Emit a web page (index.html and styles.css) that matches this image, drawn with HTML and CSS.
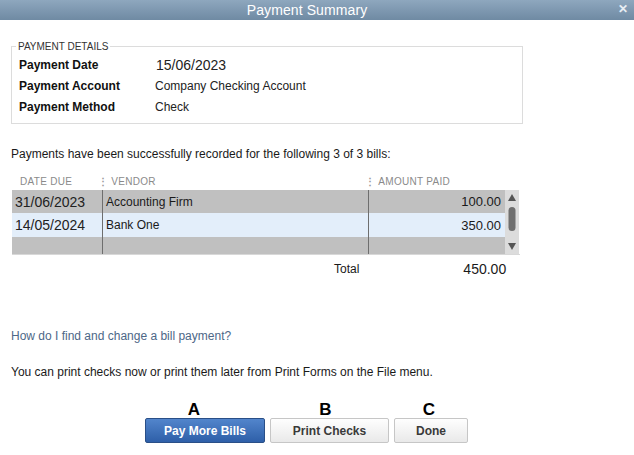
FILE: index.html
```html
<!DOCTYPE html>
<html lang="en">
<head>
  <meta charset="UTF-8" />
  <title>Payment Summary</title>
  <link rel="stylesheet" href="styles.css">
</head>
<body>
  <!-- title bar -->
  <div class="titlebar">
    <span class="title">Payment Summary</span>
    <span class="close">✕</span>
  </div>

  <div class="content">
    <fieldset class="details">
      <legend>PAYMENT DETAILS</legend>
      <div class="detail-grid">
        <span class="lbl">Payment Date</span><span class="val big">15/06/2023</span>
        <span class="lbl">Payment Account</span><span class="val">Company Checking Account</span>
        <span class="lbl">Payment Method</span><span class="val">Check</span>
      </div>
    </fieldset>

    <p class="msg">Payments have been successfully recorded for the following 3 of 3 bills:</p>

    <!-- bills table -->
    <div class="bills">
      <div class="head">
        <span class="h-date">DATE DUE</span>
        <span class="h-vendor"><i>⋮</i>VENDOR</span>
        <span class="h-amount"><i>⋮</i>AMOUNT PAID</span>
      </div>
      <div class="body">
        <div class="rows">
          <div class="row grey"><span class="c-date">31/06/2023</span><span class="c-vendor">Accounting Firm</span><span class="c-amount">100.00</span></div>
          <div class="row blue"><span class="c-date">14/05/2024</span><span class="c-vendor">Bank One</span><span class="c-amount">350.00</span></div>
          <div class="row grey short"><span class="c-date"></span><span class="c-vendor"></span><span class="c-amount"></span></div>
        </div>
        <div class="scroll">
          <svg width="14" height="64" viewBox="0 0 14 64">
            <path d="M3 11 L7 4 L11 11 Z" fill="#555"/>
            <rect x="3.5" y="17" width="7" height="24" rx="3.5" fill="#6f6f6f"/>
            <path d="M3 53 L7 60 L11 53 Z" fill="#555"/>
          </svg>
        </div>
      </div>
      <div class="total"><span class="t-lbl">Total</span><span class="t-val">450.00</span></div>
    </div>

    <p class="help">How do I find and change a bill payment?</p>
    <p class="note">You can print checks now or print them later from Print Forms on the File menu.</p>

    <div class="actions">
      <div class="act a"><b>A</b><button class="btn primary">Pay More Bills</button></div>
      <div class="act b"><b>B</b><button class="btn">Print Checks</button></div>
      <div class="act c"><b>C</b><button class="btn">Done</button></div>
    </div>
  </div>
</body>
</html>
```

FILE: styles.css
```css
body, html { margin:0; padding:0; width:634px; height:455px; background:#fff; font-family:'Liberation Sans',Arial,sans-serif; font-size:12px; color:#1a1a1a; overflow:hidden; }
/* title bar */
.titlebar { height:20px; display:flex; align-items:center; justify-content:center; background:linear-gradient(#8ea7be,#6f8aa3); color:#fff; position:relative; }
.title { font-size:14px; margin-left:-20px; letter-spacing:0.1px; }
.close { position:absolute; right:6px; top:2px; font-size:12px; font-weight:bold; color:#e8eef4; }
.content { padding:0 0 0 11px; }
/* payment details */
.details { margin:21px 0 0 0; padding:2px 0 6px 7px; border:1px solid #dcdcdc; box-sizing:border-box; width:512px; }
.details legend { font-size:10px; color:#333; padding:0 2px; margin-left:-3px; line-height:11px; }
.detail-grid { display:grid; grid-template-columns:136px 1fr; grid-auto-rows:21px; align-items:center; }
.lbl { font-weight:bold; color:#111; }
.val { color:#222; }
.val.big { font-size:14px; padding-left:1px; }
.msg { margin:23px 0 0 0; line-height:14px; }
/* table */
.bills { width:509px; margin-top:13px; }
.head { height:15px; position:relative; font-size:10px; color:#8a8a8a; letter-spacing:0.3px; }
.head span { position:absolute; top:2px; }
.head i { font-style:normal; color:#999; margin-right:3px; font-weight:bold; }
.h-date { left:9px; }
.h-vendor { left:87px; }
.h-amount { left:354px; }
.body { display:flex; margin-top:1px; margin-left:1px; border-bottom:1px solid #d8d8d8; }
.rows { width:493px; }
.row { display:grid; grid-template-columns:90px 266px 1fr; height:23px; align-items:center; }
.row.blue { height:24px; }
.row.short { height:17px; }
.grey { background:#c0c0c0; }
.blue { background:#e3eefa; }
.row span { height:100%; display:flex; align-items:center; }
.c-date { font-size:14px; padding-left:3px; color:#222; }
.c-vendor { border-left:1px solid #6e6e6e; padding-left:3px; }
.c-amount { border-left:1px solid #6e6e6e; justify-content:flex-end; padding-right:4px; font-size:13px; }
.scroll { width:14px; background:#dcdcdc; display:flex; }
.total { display:flex; margin-top:6px; height:16px; align-items:center; }
.t-lbl { margin-left:323px; }
.t-val { margin-left:104px; font-size:14px; }
.help { margin:52px 0 0 0; color:#4d6787; line-height:14px; }
.note { margin:22px 0 0 0; line-height:14px; }
/* buttons */
.actions { display:flex; gap:5px; margin:22px 0 0 134px; }
.act { display:flex; flex-direction:column; align-items:center; }
.act b { font-size:17px; line-height:18px; height:17px; color:#000; }
.act.a b { margin-right:22px; }
.act.b b { margin-right:8px; }
.act.c b { margin-right:4px; }
.btn { height:25px; font-family:'Liberation Sans',Arial,sans-serif; font-size:12px; font-weight:bold; color:#3a3a3a; background:linear-gradient(#fefefe,#e9e9e9); border:1px solid #c6c6c6; border-radius:2px; padding:0; }
.act.a .btn { width:120px; }
.act.b .btn { width:119px; }
.act.c .btn { width:74px; }
.btn.primary { color:#fff; background:linear-gradient(#5285cc,#2e5fa8); border-color:#2a4f87; }
```
